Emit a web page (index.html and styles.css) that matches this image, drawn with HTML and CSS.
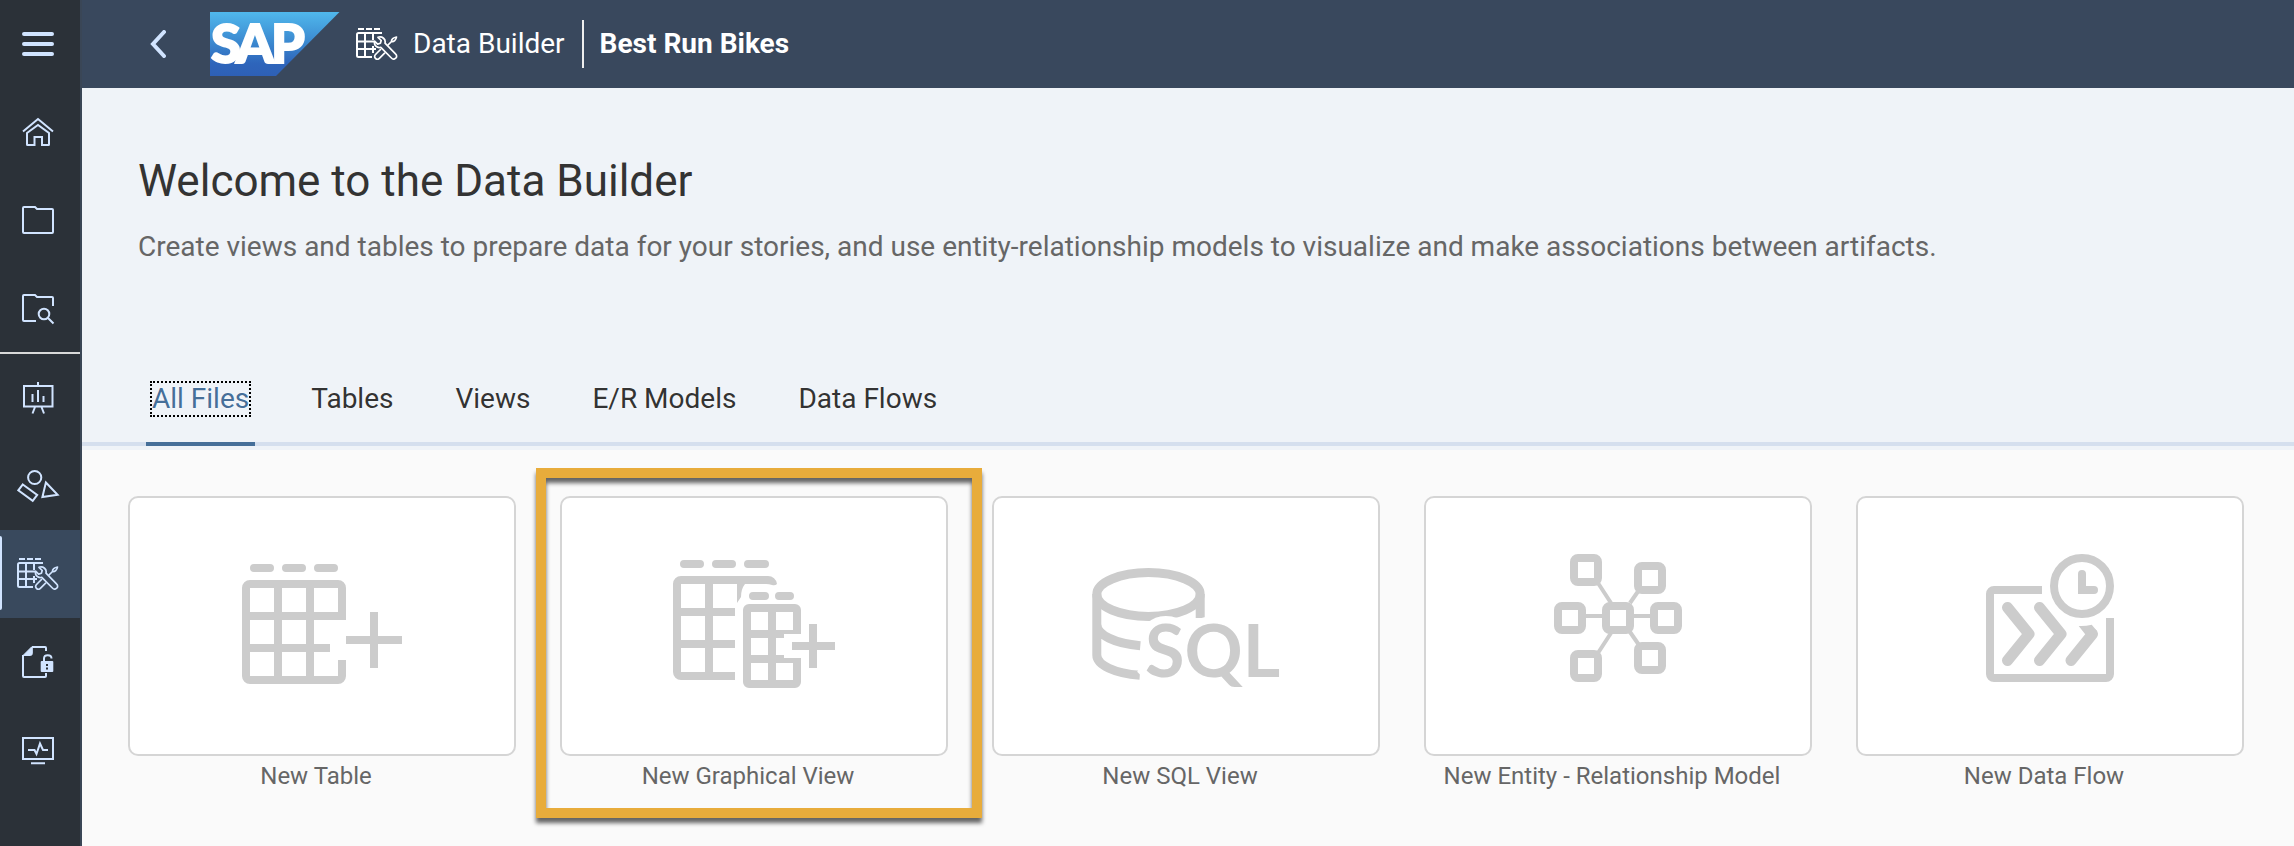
FILE: index.html
```html
<!DOCTYPE html>
<html lang="en">
<head>
<meta charset="utf-8">
<title>Data Builder</title>
<link rel="stylesheet" href="styles.css">
</head>
<body>
<svg class="defs" aria-hidden="true">
  <symbol id="builder" viewBox="0 0 42 32">
    <g fill="none" stroke="currentColor" stroke-width="2">
      <path d="M2 1h6M10 1h6M18 1h6"/>
      <path d="M26 5H2.500a1.500 1.500 0 0 0-1.500 1.500v21a1.500 1.500 0 0 0 1.500 1.500H16M1 13.500h17M1 21h19M9 5v24M17 5v7M17 18v7"/>
    </g>
    <g fill="none" stroke="currentColor" stroke-width="1.700" stroke-linejoin="round" stroke-linecap="round">
      <path d="M22 9.300l3.200 3.200-.8 2.800-2.800.8-3-3c-1 4.200 2.300 7.300 6.200 6.200l10.600 10.700c1.400 1.400 3 1.400 4.300.2 1.300-1.300 1.200-3-.2-4.300L29 15.200c1-4-2.600-7.200-7-5.900z"/>
      <path d="M32 17l3.500-3.500M35.500 13.500c-.4-2 2-4 5-4.500-.4 3-2.800 5-5 4.500z"/>
      <path d="M24.500 21.500l-5 5c-1.300 1.300-1 3 .1 4 1 .9 2.800.9 4-.4l5-5"/>
    </g>
  </symbol>
</svg>
<div class="app">
  <nav class="side" aria-label="Main">
    <button class="side-item" aria-label="Menu"><svg class="ico" viewBox="0 0 32 32"><path d="M2 6h28M2 16h28M2 26h28" stroke="currentColor" stroke-width="4" stroke-linecap="round"/></svg></button>
    <a class="side-item" href="#" aria-label="Home"><svg class="ico line" viewBox="0 0 32 32"><path d="M1 15.500L16 3l15 12.500M5 17l11-8 11 8v11.500a.5.5 0 0 1-.5.5H20v-8h-7.500v8h-7a.5.5 0 0 1-.5-.5z"/></svg></a>
    <a class="side-item" href="#" aria-label="Files"><svg class="ico line" viewBox="0 0 32 32"><path d="M2 3h11l2 2h15a1 1 0 0 1 1 1v22a1 1 0 0 1-1 1H2a1 1 0 0 1-1-1V4a1 1 0 0 1 1-1z"/></svg></a>
    <a class="side-item" href="#" aria-label="Search files"><svg class="ico line" viewBox="0 0 32 32"><path d="M14 29H2a1 1 0 0 1-1-1V4a1 1 0 0 1 1-1h11l2 2h15a1 1 0 0 1 1 1v8M26 26l5.500 5.500"/><circle cx="22" cy="22" r="5.300"/></svg></a>
    <hr class="side-rule">
    <a class="side-item" href="#" aria-label="Stories"><svg class="ico line" viewBox="0 0 32 32"><path d="M2 4h28.500v20.500H2zM16 0v4M10.500 12v8M16 8v12M21.500 14v6M13 25l-2.500 6.500M19.500 25l2.500 6.500"/></svg></a>
    <a class="side-item" href="#" aria-label="Business Builder"><svg class="ico-wide line" viewBox="0 0 42 32"><circle cx="17.700" cy="7.500" r="6.600"/><path d="M5.800 14.500l14.400 10.400-4.500 6L1.300 20.400zM28.900 12.500l11.700 12.200-15.200 2.300z"/></svg></a>
    <a class="side-item active" href="#" aria-label="Data Builder" aria-current="page"><svg class="ico-wide" viewBox="0 0 42 32"><use href="#builder"/></svg></a>
    <a class="side-item" href="#" aria-label="Data access controls"><svg class="ico line" viewBox="0 0 32 32"><path d="M10 1h13a1 1 0 0 1 1 1v3M24 27v3a1 1 0 0 1-1 1H2a1 1 0 0 1-1-1V9"/><path d="M1 9.500L9.500 1h.8v6.500a2 2 0 0 1-2 2z" fill="currentColor" stroke-width="1"/><path d="M22 15v-2.500c0-4.500 7.500-4.500 7.500 0"/><rect x="18.700" y="15" width="12.600" height="11" rx="1" fill="currentColor" stroke="none"/><path class="keyhole" d="M25 18v2M25 21.500v2"/></svg></a>
    <a class="side-item" href="#" aria-label="Monitoring"><svg class="ico line" viewBox="0 0 32 32"><path d="M1 4h30v21H1zM9 29.300h14M6 16h6.500l2 4 3.500-10.500 3 6.500h5"/></svg></a>
  </nav>
  <div class="page">
    <header class="shell">
      <button class="back" aria-label="Back"><svg class="back-ico" viewBox="0 0 16 28"><path d="M14 2L3 14l11 12" fill="none" stroke="currentColor" stroke-width="4" stroke-linecap="round"/></svg></button>
      <svg class="logo" viewBox="0 0 130 64" role="img" aria-label="SAP">
        <defs><linearGradient id="sap" x1="0" y1="0" x2="0" y2="1"><stop offset="0" stop-color="#50b8ec"/><stop offset=".5" stop-color="#3a86ce"/><stop offset=".8" stop-color="#2e65bb"/><stop offset="1" stop-color="#2e60b6"/></linearGradient></defs>
        <path d="M0 0h129.500L66 64H0z" fill="url(#sap)"/>
        <text class="logo-text" x="1 26 61" y="51">SAP</text>
      </svg>
      <svg class="ico-wide shell-ico" viewBox="0 0 42 32" aria-hidden="true"><use href="#builder"/></svg>
      <span class="app-name">Data Builder</span>
      <span class="space-name">Best Run Bikes</span>
    </header>
    <section class="intro">
      <h1 class="title">Welcome to the Data Builder</h1>
      <p class="lead">Create views and tables to prepare data for your stories, and use entity-relationship models to visualize and make associations between artifacts.</p>
      <div class="tabs" role="tablist">
        <button class="tab selected" role="tab" aria-selected="true"><span class="tab-text">All Files</span></button>
        <button class="tab" role="tab"><span class="tab-text">Tables</span></button>
        <button class="tab" role="tab"><span class="tab-text">Views</span></button>
        <button class="tab" role="tab"><span class="tab-text">E/R Models</span></button>
        <button class="tab" role="tab"><span class="tab-text">Data Flows</span></button>
      </div>
    </section>
    <main class="tiles">
      <button class="tile">
        <span class="card"><svg class="art" viewBox="0 0 192 136">
          <path class="dash" d="M28 14h16M60 14h16M92 14h16"/>
          <path d="M116 66V34a4 4 0 0 0-4-4H24a4 4 0 0 0-4 4v88a4 4 0 0 0 4 4h88a4 4 0 0 0 4-4v-16M20 62h96M20 94h84M52 30v96M84 30v96M120 86h56M148 58v56"/>
        </svg></span>
        <span class="label">New Table</span>
      </button>
      <div class="spot">
        <button class="tile">
          <span class="card"><svg class="art" viewBox="0 0 192 136">
            <path class="dash" d="M26 10h16M58 10h16M90 10h17M95 42h12M121 42h11"/>
            <path d="M80 26H23a4 4 0 0 0-4 4v88a4 4 0 0 0 4 4h54M19 58h58M19 90h58M51 26v96"/>
            <path class="solid" d="M76 22h34a9 9 0 0 1 9 8q-2 2-5 1-3-1-6-1H87q-4 5-4 13l-4 6V30h-3z"/>
            <path d="M139 80V56a2 2 0 0 0-2-2H91a2 2 0 0 0-2 2v72a2 2 0 0 0 2 2h46a2 2 0 0 0 2-2v-24M89 80h37M89 105h37M114 54v76M134 92h43M155 70v44"/>
            <path class="solid" d="M126 76h10v4h-10zM126 104h10v5h-10z"/>
          </svg></span>
          <span class="label">New Graphical View</span>
        </button>
        <span class="frame"></span>
      </div>
      <button class="tile">
        <span class="card"><svg class="art" viewBox="0 0 192 136">
          <g class="drum"><ellipse cx="58.500" cy="40.500" rx="51.700" ry="21.900"/>
          <path d="M6.800 40v61c0 10 18 18.500 43 20.200M6.800 70c0 11 18 19.500 43.500 21.700M110.200 40v24"/></g>
          <text class="sql" x="55" y="123">SQL</text>
        </svg></span>
        <span class="label">New SQL View</span>
      </button>
      <button class="tile">
        <span class="card"><svg class="art" viewBox="0 0 192 136">
          <rect x="52" y="4" width="24" height="24" rx="4"/><rect x="116" y="12" width="24" height="24" rx="4"/>
          <rect x="36" y="52" width="24" height="24" rx="4"/><rect x="84" y="52" width="24" height="24" rx="4"/><rect x="132" y="52" width="24" height="24" rx="4"/>
          <rect x="52" y="100" width="24" height="24" rx="4"/><rect x="116" y="92" width="24" height="24" rx="4"/>
          <path class="thin" d="M76 29l13 20M117 36l-9 13M64 62h16M112 62h16M89 79L76 99M108 78l9 13"/>
        </svg></span>
        <span class="label">New Entity - Relationship Model</span>
      </button>
      <button class="tile">
        <span class="card"><svg class="art" viewBox="0 0 192 136">
          <path d="M88 36H40a4 4 0 0 0-4 4v80a4 4 0 0 0 4 4h112a4 4 0 0 0 4-4V64"/>
          <circle cx="128" cy="32" r="28"/>
          <path d="M128 20v16h12" stroke-linecap="round"/><path class="solid" d="M124 34h6v6h-6z"/>
          <path class="arrow" d="M53.500 53.500L75 80l-21.500 26.500M85.500 53.500L107 80l-21.500 26.500M138.500 80L117 106.500"/>
          <path class="solid" d="M124.700 72q6.300.5 13-1.300l5.300 6.300-6 7-6-4z"/>
        </svg></span>
        <span class="label">New Data Flow</span>
      </button>
    </main>
  </div>
</div>
</body>
</html>
```
FILE: styles.css
```css
* { box-sizing: border-box; }
body { margin: 0; font-family: Roboto, "Noto Sans", sans-serif; background: #fafafa; color: #333; }
button { font: inherit; color: inherit; background: none; border: 0; margin: 0; padding: 0; cursor: pointer; }
.defs { display: none; }
.app { display: flex; min-height: 100vh; }

.side { flex: none; width: 82px; background: #2b3138; border-right: 2px solid #3a4656; color: #d1e4ff; }
.side-item { position: relative; display: flex; align-items: center; justify-content: center; width: 100%; height: 88px; padding-right: 4px; color: #d1e4ff; }
.side-item.active { background: #39495d; }
.side-item.active::before { content: ""; position: absolute; left: 0; top: 6px; bottom: 8px; width: 2px; border-radius: 0 2px 2px 0; background: #d1e4ff; }
.side-rule { height: 2px; margin: 0; border: 0; background: #d9d9d9; }
.ico { width: 32px; height: 32px; overflow: visible; }
.ico-wide { width: 42px; height: 32px; overflow: visible; }
.line { fill: none; stroke: currentColor; stroke-width: 2; }
.keyhole { stroke: #2b3138; }

.page { flex: 1; min-width: 0; }
.shell { display: flex; align-items: center; height: 88px; padding-left: 68px; background: #39485d; color: #fff; font-size: 28px; line-height: 48px; }
.back { display: flex; width: 16px; margin-right: 44px; color: #d1e4ff; }
.back-ico { width: 16px; height: 28px; }
.logo { width: 130px; height: 64px; margin-right: 16px; overflow: visible; }
.logo-text { font-family: Lato, sans-serif; font-weight: 900; font-size: 54px; fill: #fff; stroke: #fff; stroke-width: 2; }
.shell-ico { margin-right: 15px; }
.app-name { padding-right: 17px; }
.space-name { padding-left: 16px; border-left: 2px solid #eee; font-weight: 700; }

.intro { background: #eff3f8; padding: 67px 0 4px; }
.title { margin: 0 56px 22px; font-size: 44px; line-height: 52px; font-weight: 400; }
.lead { margin: 0 56px 116px; font-size: 28px; line-height: 36px; color: #666; }
.tabs { display: flex; gap: 50px; padding-left: 64px; box-shadow: inset 0 -4px #d5dfee; }
.tab { padding: 0 4px 25px; border-bottom: 4px solid transparent; font-size: 28px; line-height: 36px; }
.tab-text { display: block; padding: 0 2px; text-shadow: 0 0 2px #fff; }
.tab.selected { color: #466f99; border-bottom-color: #466f99; }
.tab.selected .tab-text { outline: 2px dotted #000; outline-offset: -2px; }

.tiles { display: flex; flex-wrap: wrap; gap: 44px; padding: 46px 46px; }
.tile { display: block; width: 388px; text-align: center; }
.card { display: flex; align-items: center; justify-content: center; height: 260px; padding-bottom: 8px; border: 2px solid #d5d5d5; border-radius: 10px; background: #fff; }
.label { display: block; padding: 4px 12px 0 0; font-size: 24px; line-height: 32px; color: #666; white-space: nowrap; }
.spot { position: relative; }
.frame { position: absolute; inset: -28px -34px -26px -24px; border: 10px solid #e8ac3b; filter: drop-shadow(0 5px 2px rgba(0, 0, 0, .6)); pointer-events: none; }

.art { width: 192px; height: 136px; overflow: visible; fill: none; stroke: #ccc; stroke-width: 8; }
.dash { stroke-linecap: round; }
.solid { fill: #ccc; stroke: none; }
.thin { stroke-width: 4; }
.drum { stroke-width: 9; }
.arrow { stroke-width: 11; stroke-linecap: round; stroke-linejoin: round; }
.sql { font-family: Lato, sans-serif; font-weight: 700; font-size: 72px; fill: #ccc; stroke: #fff; stroke-width: 15; paint-order: stroke; }
```
